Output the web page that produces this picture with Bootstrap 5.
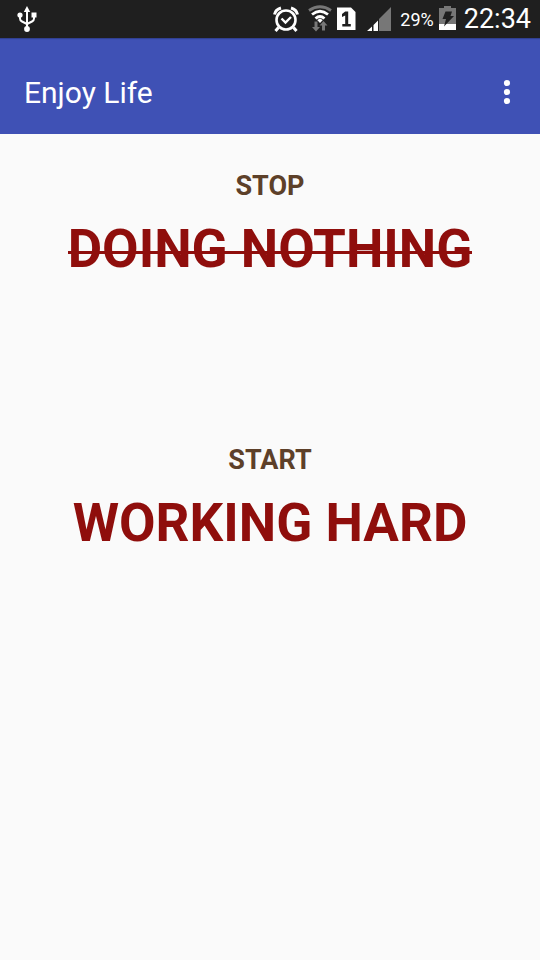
<!DOCTYPE html>
<html lang="en">
<head>
<meta charset="utf-8">
<meta name="viewport" content="width=device-width, initial-scale=1">
<title>Enjoy Life</title>
<link href="https://cdn.jsdelivr.net/npm/bootstrap@5.3.0/dist/css/bootstrap.min.css" rel="stylesheet">
<style>
  body { font-family: Roboto, "Noto Sans", sans-serif; background: #fafafa; }
  .status-bar { background: #1f1f1f; height: 38px; padding: 0 9px 0 16px; }
  .status-bar svg { display: block; flex: none; }
  .battery-text { font-size: 18px; line-height: 38px; margin: 1px 5px 0 8px; }
  .clock { font-size: 27px; line-height: 36px; margin-left: 8px; }
  .app-bar { background: #3f51b5; height: 96px; padding: 12px 16px 0 24px; box-shadow: inset 0 2px 1px -1px #303f8f; }
  .app-title { font-size: 30px; line-height: 36px; font-weight: 400; padding-top: 2px; }
  .menu-btn { width: 34px; height: 48px; }
  .habit { padding-top: 36px; margin-bottom: 127px; }
  .habit + .habit { margin-bottom: 0; }
  .habit h2 { font-size: 27px; line-height: 32px; font-weight: 700; color: #5d4029; margin-bottom: 15px; }
  .habit p { font-size: 53px; line-height: 64px; font-weight: 700; color: #8f0e0c; }
  /* strike drawn as a background band so that it sits a little below the font's own position */
  .habit s { text-decoration: none; background: linear-gradient(#8f0e0c, #8f0e0c) 0 33px / 100% 3px no-repeat; }
</style>
</head>
<body>
<div class="status-bar d-flex align-items-center text-white">
  <svg class="me-auto" width="22" height="28" viewBox="0 0 22 28" fill="none" stroke="#fff" stroke-width="2" aria-label="USB">
    <path d="M11 5v18M4 10v3.500q0 2 2 3l5 2.500M18 10v3.500q0 2-2 3l-5 2.500"/>
    <path d="M11 1l3.200 6H7.800z" fill="#fff" stroke="none"/>
    <circle cx="4" cy="10" r="2.600" fill="#fff" stroke="none"/>
    <rect x="15.500" y="7.500" width="5" height="5" fill="#fff" stroke="none"/>
    <circle cx="11" cy="24" r="2.900" fill="#fff" stroke="none"/>
  </svg>
  <svg width="28" height="28" viewBox="0 0 28 28" fill="none" stroke="#fff" aria-label="Alarm">
    <circle cx="14" cy="15" r="9.500" stroke-width="2.600"/>
    <path d="M2.500 9.500Q3.500 4.500 9 3M25.500 9.500Q24.500 4.500 19 3" stroke-width="3"/>
    <path d="M6.500 22.500L3.500 26M21.500 22.500l3 3.500" stroke-width="3"/>
    <path d="M9.500 13.500l4 4 5.500-5.500" stroke-width="2.400"/>
  </svg>
  <svg class="ms-2 me-1" width="24" height="28" viewBox="0 0 24 28" fill="none" aria-label="Wi-Fi">
    <path d="M1 5.500Q12-2 23 5.500" stroke="#777" stroke-width="2.800"/>
    <path d="M4 9.500Q12 3 20 9.500" stroke="#fff" stroke-width="2.800"/>
    <path d="M7.500 13.500Q12 9.500 16.500 13.500" stroke="#fff" stroke-width="2.800"/>
    <path d="M12 13.500l2.800 1.500L12 18l-2.800-3z" fill="#fff"/>
    <path d="M6.500 16.500h3v5.500h2.500l-4 4.500-4-4.500h2.500zM14 25.500h3v-5h2.500l-4-4.500-4 4.500H14z" fill="#777"/>
  </svg>
  <svg width="20" height="26" viewBox="0 0 20 26" aria-label="SIM 1">
    <path d="M1 1.500h14l4.500 4.500v18H1z" fill="#fff"/>
    <path d="M9.200 5.500h3v12.500h2.600v2.500H6.300V18h2.900V9.500L6 11V8z" fill="#1f1f1f"/>
  </svg>
  <svg class="ms-2" width="28" height="26" viewBox="0 0 28 26" aria-label="Signal">
    <path d="M27 1v24H15V13z" fill="#777"/>
    <path d="M3 25l5-4.500V25zM9.500 25v-6l4.500-4.500V25z" fill="#fff"/>
  </svg>
  <span class="battery-text">29%</span>
  <svg width="17" height="26" viewBox="0 0 17 26" aria-label="Battery charging">
    <path d="M5 0h7v2h5v16H0V2h5z" fill="#777"/>
    <path d="M0 18h17v6H0z" fill="#fff"/>
    <path d="M6.500 5.500h6.500L11.500 10H15L5 20.500l2-7.500H3.500z" fill="#1f1f1f"/>
  </svg>
  <span class="clock">22:34</span>
</div>
<header class="app-bar d-flex align-items-center justify-content-between text-white">
  <h1 class="app-title mb-0">Enjoy Life</h1>
  <button type="button" class="menu-btn btn border-0 p-0 d-flex align-items-center justify-content-center" aria-label="More options">
    <svg width="8" height="26" viewBox="0 0 8 26" fill="#fff"><circle cx="4" cy="4" r="3.100"/><circle cx="4" cy="13" r="3.100"/><circle cx="4" cy="22" r="3.100"/></svg>
  </button>
</header>
<main class="text-center">
  <section class="habit">
    <h2>STOP</h2>
    <p class="mb-0"><s>DOING NOTHING</s></p>
  </section>
  <section class="habit">
    <h2>START</h2>
    <p class="mb-0">WORKING HARD</p>
  </section>
</main>
<script src="https://cdn.jsdelivr.net/npm/bootstrap@5.3.0/dist/js/bootstrap.bundle.min.js"></script>
</body>
</html>
